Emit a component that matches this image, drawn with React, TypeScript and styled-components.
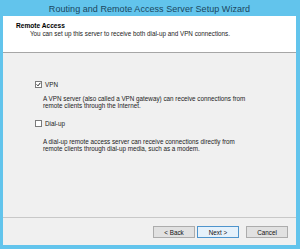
import { createGlobalStyle, styled } from "styled-components";

const GlobalStyle = createGlobalStyle`
  html, body {
    margin: 0;
    padding: 0;
    background: #62c4ec;
  }
  body {
    font-family: "Liberation Sans", Arial, sans-serif;
  }
`;

const Window = styled.div`
  width: 300px;
  height: 249px;
  background: #62c4ec;
  display: flex;
  flex-direction: column;
  box-sizing: border-box;
  padding: 0 4px 4px 3px;
`;

const TitleBar = styled.div`
  height: 16px;
  display: flex;
  align-items: center;
  justify-content: center;
  font-size: 9px;
  color: #1a4660;
  letter-spacing: 0.05px;
  padding-top: 1px;
  box-sizing: border-box;
`;

const Client = styled.div`
  flex: 1;
  display: flex;
  flex-direction: column;
  background: #f0f0f0;
  font-size: 6.3px;
  color: #1a1a1a;
`;

const Header = styled.div`
  height: 37px;
  box-sizing: border-box;
  background: #ffffff;
  border-bottom: 1px solid #a6a6a6;
  padding: 6px 0 0 13px;
`;

const HeaderTitle = styled.div`
  font-weight: bold;
  font-size: 6.6px;
  color: #000;
  line-height: 8px;
`;

const HeaderText = styled.div`
  padding-left: 14px;
  line-height: 8px;
`;

const Body = styled.div`
  flex: 1;
  padding: 28px 0 0 32px;
  border-bottom: 1px solid #c8c8c8;
`;

const Option = styled.div<{ $gap: number }>`
  margin-bottom: ${(p) => p.$gap}px;
`;

const CheckRow = styled.label`
  display: flex;
  align-items: center;
  gap: 3px;
  height: 7px;
`;

const Box = styled.span`
  width: 5px;
  height: 5px;
  border: 1px solid #7a7a7a;
  background: #fff;
  display: flex;
  align-items: center;
  justify-content: center;
`;

const Desc = styled.div<{ $top: number }>`
  margin-top: ${(p) => p.$top}px;
  padding-left: 8px;
  line-height: 7px;
  color: #222;
`;

const Footer = styled.div`
  height: 27px;
  display: flex;
  align-items: center;
  padding: 1px 4px 0 150px;
  box-sizing: border-box;
  gap: 2px;
`;

const Button = styled.div<{ $default?: boolean; $space?: number }>`
  width: 42px;
  height: 12px;
  box-sizing: border-box;
  border: 1px solid ${(p) => (p.$default ? "#4e94cc" : "#acacac")};
  background: ${(p) => (p.$default ? "#e5f1fb" : "#e1e1e1")};
  display: flex;
  align-items: center;
  justify-content: center;
  font-size: 6.3px;
  color: #111;
  margin-left: ${(p) => p.$space ?? 0}px;
`;

function Check({ checked }: { checked: boolean }) {
  return (
    <Box>
      {checked && (
        <svg width="5" height="5" viewBox="0 0 5 5">
          <path d="M0.6 2.4 L2 3.8 L4.4 0.8" stroke="#222" strokeWidth="1" fill="none" />
        </svg>
      )}
    </Box>
  );
}

export default function App() {
  return (
    <>
      <GlobalStyle />
      <Window>
        <TitleBar>Routing and Remote Access Server Setup Wizard</TitleBar>
        <Client>
          <Header>
            <HeaderTitle>Remote Access</HeaderTitle>
            <HeaderText>
              You can set up this server to receive both dial-up and VPN connections.
            </HeaderText>
          </Header>
          <Body>
            <Option $gap={11}>
              <CheckRow>
                <Check checked />
                VPN
              </CheckRow>
              <Desc $top={7}>
                A VPN server (also called a VPN gateway) can receive connections from
                <br />
                remote clients through the Internet.
              </Desc>
            </Option>
            <Option $gap={0}>
              <CheckRow>
                <Check checked={false} />
                Dial-up
              </CheckRow>
              <Desc $top={11}>
                A dial-up remote access server can receive connections directly from
                <br />
                remote clients through dial-up media, such as a modem.
              </Desc>
            </Option>
          </Body>
          <Footer>
            <Button>&lt; Back</Button>
            <Button $default>Next &gt;</Button>
            <Button $space={5}>Cancel</Button>
          </Footer>
        </Client>
      </Window>
    </>
  );
}
